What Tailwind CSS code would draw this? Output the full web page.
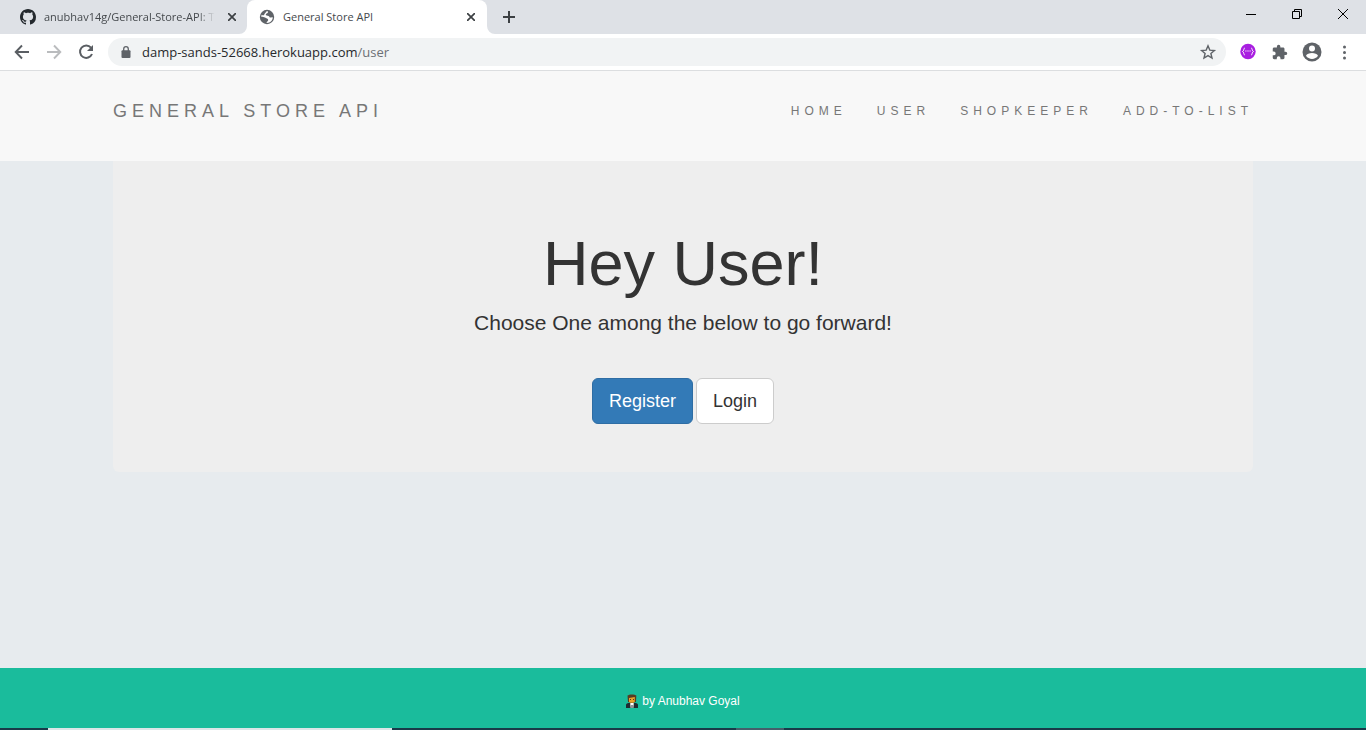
<!DOCTYPE html>
<html lang="en">
<head>
<meta charset="utf-8">
<title>General Store API</title>
<script src="https://cdn.jsdelivr.net/npm/@tailwindcss/browser@4"></script>
</head>
<body class="flex min-h-screen flex-col bg-[#e7ebee] font-['Liberation_Sans',Arial,sans-serif] text-[#333]">

<!-- Browser chrome -->
<div class="font-['Open_Sans','Noto_Sans',sans-serif]">
  <div class="flex h-[34px] bg-[#dee1e6]">
    <div class="flex w-[247px] items-center justify-between pl-5 pr-[7px]">
      <div class="flex items-center">
        <svg class="size-4 shrink-0" viewBox="0 0 16 16" fill="#24292e"><path d="M8 0C3.58 0 0 3.58 0 8c0 3.54 2.29 6.53 5.47 7.59.4.07.55-.17.55-.38 0-.19-.01-.82-.01-1.49-2.01.37-2.53-.49-2.69-.94-.09-.23-.48-.94-.82-1.13-.28-.15-.68-.52-.01-.53.63-.01 1.08.58 1.23.82.72 1.21 1.87.87 2.33.66.07-.52.28-.87.51-1.07-1.78-.2-3.64-.89-3.64-3.95 0-.87.31-1.59.82-2.15-.08-.2-.36-1.02.08-2.12 0 0 .67-.21 2.2.82.64-.18 1.32-.27 2-.27s1.36.09 2 .27c1.53-1.04 2.2-.82 2.2-.82.44 1.1.16 1.92.08 2.12.51.56.82 1.27.82 2.15 0 3.07-1.87 3.75-3.65 3.95.29.25.54.73.54 1.48 0 1.07-.01 1.93-.01 2.2 0 .21.15.46.55.38A8.01 8.01 0 0 0 16 8c0-4.42-3.58-8-8-8z"/></svg>
        <span class="ml-2 whitespace-nowrap mask-r-from-90% mask-r-to-100% text-[11px] leading-4 text-[#45494d]">anubhav14g/General-Store-API: T</span>
      </div>
      <button class="flex size-4 items-center justify-center" aria-label="Close tab"><svg class="size-2" viewBox="0 0 8 8" stroke="#3c4043" stroke-width="1.7"><path d="M0 0l8 8M8 0l-8 8"/></svg></button>
    </div>
    <div class="relative flex w-[240px] items-center rounded-t-lg bg-white pl-3 pr-2">
      <svg class="absolute -left-2 bottom-0 size-2" viewBox="0 0 8 8" fill="#fff"><path d="M8 0v8H0a8 8 0 0 0 8-8z"/></svg>
      <svg class="absolute -right-2 bottom-0 size-2" viewBox="0 0 8 8" fill="#fff"><path d="M0 0v8h8a8 8 0 0 1-8-8z"/></svg>
      <svg class="size-4 shrink-0" viewBox="0 0 16 16"><circle cx="8" cy="8" r="7.2" fill="#5f6368"/><path d="M8.800 2.300C10 4.200 6.800 4.300 6.800 5.700 6.800 6.800 8.400 6.500 9.600 6.900 10.700 7.300 10.200 8.700 11.600 8.600L13.800 8.200C13.700 11.500 11.300 13.800 8 13.900L7.500 13.600C7.500 12.500 9.200 12.200 9.200 10.900 9.200 9.300 7 9.700 6 8.600 5.200 7.700 3.500 8.100 2.300 7.700 2.200 7 2.400 6.300 2.700 5.700 3.600 6.700 5 6.500 5.300 5.400 5.600 4.200 6.800 3.900 7.200 2.400z" fill="#fff"/></svg>
      <span class="ml-2 grow text-[11px] leading-4 text-[#45494d]">General Store API</span>
      <button class="flex size-4 items-center justify-center" aria-label="Close tab"><svg class="size-2" viewBox="0 0 8 8" stroke="#3c4043" stroke-width="1.7"><path d="M0 0l8 8M8 0l-8 8"/></svg></button>
    </div>
    <button class="ml-4 flex w-3 items-center" aria-label="New tab"><svg class="size-3" viewBox="0 0 12 12" stroke="#3c4043" stroke-width="2"><path d="M6 0v12M0 6h12"/></svg></button>
    <div class="ml-auto flex h-7">
      <button class="flex w-[46px] items-center justify-center" aria-label="Minimize"><svg class="h-[10px] w-[10px]" viewBox="0 0 10 10" stroke="#000"><path d="M0 5.500h10"/></svg></button>
      <button class="flex w-[46px] items-center justify-center" aria-label="Restore"><svg class="h-[10px] w-[10px]" viewBox="0 0 10 10" fill="none" stroke="#000"><path d="M.5 2.500h7v7h-7zM2.500 2.500v-2h7v7h-2"/></svg></button>
      <button class="flex w-[46px] items-center justify-center" aria-label="Close window"><svg class="h-[10px] w-[10px]" viewBox="0 0 10 10" stroke="#000"><path d="M0 0l10 10M10 0L0 10"/></svg></button>
    </div>
  </div>
  <div class="flex h-[37px] items-center border-b border-[#dcdee0] bg-white pl-3 pr-3">
    <div class="flex gap-3">
      <button aria-label="Back"><svg class="size-5" viewBox="0 0 20 20" fill="none" stroke="#5a5e63" stroke-width="1.900"><path d="M17 10H4M10 3.500L3.700 10l6.300 6.500"/></svg></button>
      <button aria-label="Forward"><svg class="size-5" viewBox="0 0 20 20" fill="none" stroke="#babcbe" stroke-width="1.900"><path d="M3 10h13M10 3.500l6.300 6.500-6.300 6.500"/></svg></button>
      <button aria-label="Reload"><svg class="size-5" viewBox="0 0 20 20"><path d="M15 5.700A6.200 6.200 0 1 0 16 12" fill="none" stroke="#5a5e63" stroke-width="2"/><path d="M17 3v6h-6z" fill="#5a5e63"/></svg></button>
    </div>
    <div class="ml-3 mr-3 flex h-7 grow items-center rounded-full bg-[#f1f3f4] pl-[11px] pr-2">
      <svg class="mr-[9px] h-3 w-[14px] shrink-0" viewBox="0 0 14 12"><rect x="2.500" y="4.300" width="9" height="7.700" rx="1" fill="#5f6368"/><path d="M4.700 5V3a2.300 2.300 0 0 1 4.600 0v2" fill="none" stroke="#5f6368" stroke-width="1.300"/></svg>
      <span class="grow text-[13px] leading-5 text-[#27292c]">damp-sands-52668.herokuapp.com<span class="text-[#6c7075]">/user</span></span>
      <button aria-label="Bookmark this tab"><svg class="size-5" viewBox="0 0 20 20" fill="none" stroke="#5f6368" stroke-width="1.400"><path d="M10 3.800l1.800 4.300 4.600.4-3.500 3 1.100 4.500-4-2.400-4 2.400 1.100-4.500-3.500-3 4.600-.4z"/></svg></button>
    </div>
    <div class="flex items-center gap-3">
      <button aria-label="Extension"><svg class="size-5" viewBox="0 0 20 20"><circle cx="10" cy="9.500" r="7.700" fill="#a81fe0"/><path d="M6.800 6C5.400 6 6.300 9 4.500 9.500 6.300 10 5.400 13 6.800 13M13.200 6c1.400 0 .5 3 2.300 3.500-1.800.5-.9 3.500-2.300 3.500" fill="none" stroke="#fff"/><path d="M7.300 9h1.200M9.400 9h1.200M11.500 9h1.200" stroke="#fff"/></svg></button>
      <button aria-label="Extensions"><svg class="size-5" viewBox="-2 -3 29 29" fill="#5f6368"><path d="M20.500 11H19V7c0-1.100-.9-2-2-2h-4V3.500a2.500 2.500 0 0 0-5 0V5H4c-1.100 0-2 .9-2 2v3.800h1.500a2.700 2.700 0 0 1 0 5.400H2V20c0 1.100.9 2 2 2h3.800v-1.500a2.700 2.700 0 0 1 5.400 0V22H17c1.100 0 2-.9 2-2v-4h1.500a2.500 2.500 0 0 0 0-5z"/></svg></button>
      <button aria-label="Profile"><svg class="size-5" viewBox="0 0 20 20"><circle cx="10" cy="10" r="9.500" fill="#5f6368"/><circle cx="10" cy="6.500" r="3" fill="#fff"/><path d="M4 13.800c1.500-3.800 10.500-3.800 12 0-2.700 4.200-9.300 4.200-12 0z" fill="#fff"/></svg></button>
      <button aria-label="Menu"><svg class="size-5" viewBox="0 0 20 20" fill="#5f6368"><circle cx="10.500" cy="5" r="1.500"/><circle cx="10.500" cy="10.500" r="1.500"/><circle cx="10.500" cy="16" r="1.500"/></svg></button>
    </div>
  </div>
</div>

<nav class="h-[90px] bg-[#f8f8f8] pt-[30px]">
  <div class="mx-auto flex max-w-[1140px] items-center justify-between">
    <a href="#" class="text-[18px] leading-5 tracking-[5px] text-[#777]">GENERAL STORE API</a>
    <div class="flex gap-[30px] text-[12px] leading-5 tracking-[5px] text-[#777]">
      <a href="#">HOME</a>
      <a href="#">USER</a>
      <a href="#">SHOPKEEPER</a>
      <a href="#">ADD-TO-LIST</a>
    </div>
  </div>
</nav>

<main class="grow">
  <div class="mx-auto flex max-w-[1140px] flex-col items-center rounded-b-md bg-[#eee] pb-12 pt-[67px]">
    <h1 class="text-[63px] leading-[70px]">Hey User!</h1>
    <p class="mt-[13px] text-[21px] leading-[24px]">Choose One among the below to go forward!</p>
    <div class="mt-[43px] flex gap-[3px]">
      <button class="rounded-md border border-[#2e6da4] bg-[#337ab7] px-4 py-[10px] text-[18px] leading-6 text-white">Register</button>
      <button class="rounded-md border border-[#ccc] bg-white px-4 py-[10px] text-[18px] leading-6">Login</button>
    </div>
  </div>
</main>

<footer class="flex h-[60px] items-center justify-center gap-1 bg-[#1abc9c] pt-[6px] text-[12px] leading-5 text-white">
  <svg class="h-[14px] w-3" viewBox="0 0 12 14"><path d="M1.500 1.500C3 0 9 0 10.300 1.500L10 8H2z" fill="#573b22"/><path d="M3 4l5.800-1v4.500L7.200 10H4.700L3 7.500z" fill="#e8a22b"/><path d="M4 5.500h1M7 5.500h1" stroke="#573b22"/><path d="M0 14v-3c0-1.500 1.500-2 3.500-2.300h5C10.500 9 12 9.500 12 11v3z" fill="#202a31"/><path d="M4.300 9h3.400v1.500L7.300 14H4.700l-.4-3.500z" fill="#fff"/><path d="M6 11v3" stroke="#202a31"/></svg>
  <span>by Anubhav Goyal</span>
</footer>

<!-- Edge of the desktop taskbar -->
<div class="flex h-[2px] bg-[#193a49]">
  <div class="ml-12 w-[344px] bg-[#dce6e8]"></div>
  <div class="ml-[344px] w-12 bg-[#455f6b]"></div>
</div>
</body>
</html>
